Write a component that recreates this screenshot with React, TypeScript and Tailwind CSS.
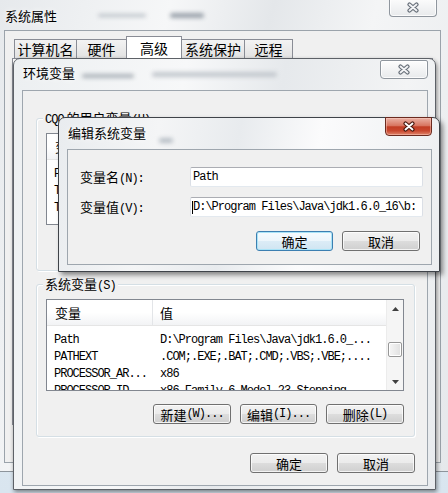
import React from "react";

const mono =
  "font-['Liberation_Mono','Noto_Sans_CJK_SC',monospace] text-[12px] tracking-[-1px]";

function M({ children }: { children: React.ReactNode }) {
  return <span className={mono}>{children}</span>;
}

function CloseX({ active }: { active?: boolean }) {
  const outer = active ? "#4a1a10" : "#68707a";
  const inner = active ? "#ffffff" : "#f3f4f6";
  return (
    <svg width="14" height="11" viewBox="0 0 14 11">
      <path d="M3.5 2.5 L10.5 8.5 M10.5 2.5 L3.5 8.5" stroke={outer} strokeWidth="4.2" strokeLinecap="round" fill="none" />
      <path d="M3.5 2.5 L10.5 8.5 M10.5 2.5 L3.5 8.5" stroke={inner} strokeWidth="1.9" strokeLinecap="round" fill="none" />
    </svg>
  );
}

function Btn({
  className,
  focus,
  children,
}: {
  className: string;
  focus?: boolean;
  children: React.ReactNode;
}) {
  return (
    <div
      className={`flex h-[20px] shrink-0 items-center justify-center rounded-[3px] border text-[13px] leading-none text-black ${
        focus
          ? "border-[#3c7fb1] bg-[linear-gradient(#f6fbfe_0%,#ecf5fb_50%,#dcecf6_50%,#d0e5f2_100%)] shadow-[inset_0_0_0_1px_#a9e3f7]"
          : "border-[#707070] bg-[linear-gradient(#f2f2f2_0%,#ebebeb_50%,#dddddd_50%,#cfcfcf_100%)] shadow-[inset_0_0_0_1px_rgba(255,255,255,0.75)]"
      } ${className}`}
    >
      {children}
    </div>
  );
}

function Arrow({ up }: { up?: boolean }) {
  return (
    <svg width="7" height="4" viewBox="0 0 7 4">
      <path d={up ? "M0 4 L3.5 0 L7 4Z" : "M0 0 L3.5 4 L7 0Z"} fill="#3f3f3f" />
    </svg>
  );
}

function ListView({ rows }: { rows: [string, string][] }) {
  return (
    <div className="flex h-[92px] w-[358px] shrink-0 border border-[#828790] bg-white">
      <div className="flex min-w-0 flex-1 flex-col overflow-hidden">
        <div className="flex h-[26px] shrink-0 border-b border-[#e5e5e5] bg-[linear-gradient(#ffffff_0%,#ffffff_50%,#f2f3f5_100%)] text-[13px] leading-none">
          <div className="flex w-[106px] items-center border-r border-[#e3e5e8] pl-[8px]">变量</div>
          <div className="flex items-center pl-[7px]">值</div>
        </div>
        <div className="flex flex-col pt-[2px]">
          {rows.map(([n, v]) => (
            <div key={n} className="flex h-[17px] shrink-0 items-center whitespace-nowrap leading-none text-black">
              <div className="w-[106px] shrink-0 overflow-hidden pl-[7px]">
                <M>{n}</M>
              </div>
              <div className="pl-[7px]">
                <M>{v}</M>
              </div>
            </div>
          ))}
        </div>
      </div>
      <div className="flex w-[17px] shrink-0 flex-col border-l border-[#ececec] bg-[#f5f5f5]">
        <div className="flex h-[17px] items-center justify-center">
          <Arrow up />
        </div>
        <div className="mx-[1px] mt-[25px] h-[15px] rounded-[2px] border border-[#979797] bg-[linear-gradient(90deg,#f6f6f6,#e0e0e0)] shadow-[inset_0_0_0_1px_#fff]" />
        <div className="mt-auto flex h-[17px] items-center justify-center">
          <Arrow />
        </div>
      </div>
    </div>
  );
}

function Group({ label, rows, btns }: { label: React.ReactNode; rows: [string, string][]; btns: React.ReactNode[] }) {
  return (
    <div className="relative flex h-[153px] w-[379px] shrink-0 flex-col rounded-[3px] border border-[#d5dfe5] pb-[12px] pl-[9px] pr-[10px] pt-[14px] shadow-[inset_1px_1px_0_#fff,1px_1px_0_#fff]">
      <div className="absolute left-[6px] top-[-9px] bg-[#f0f0f0] px-[2px] text-[13px] leading-[16px] text-black">{label}</div>
      <ListView rows={rows} />
      <div className="mt-[13px] flex justify-end gap-[9px]">
        <Btn className="w-[78px]">{btns[0]}</Btn>
        <Btn className="w-[77px]">{btns[1]}</Btn>
        <Btn className="w-[78px]">{btns[2]}</Btn>
      </div>
    </div>
  );
}

function Blob({ className }: { className: string }) {
  return <div className={`absolute rounded-full blur-[2px] ${className}`} />;
}

export default function App() {
  const tabs: [string, string, boolean][] = [
    ["计算机名", "w-[63px]", false],
    ["硬件", "w-[51px]", false],
    ["高级", "w-[56px]", true],
    ["系统保护", "w-[64px]", false],
    ["远程", "w-[49px]", false],
  ];
  return (
    <div className="relative h-[493px] w-[448px] overflow-hidden bg-[linear-gradient(180deg,#eef3f7,#d9e5ef)] font-['Noto_Sans_CJK_SC',sans-serif] text-black">
      {/* Outer window: 系统属性 */}
      <div className="absolute left-[-1px] top-[-3px] flex h-[475px] w-[450px] flex-col border border-[#8d949b] bg-[linear-gradient(105deg,#e6e9ec_0%,#f6f7f8_30%,#e4e7ea_48%,#f4f5f6_66%,#e5e8eb_100%)]">
        <div className="relative flex h-[32px] shrink-0 items-center pl-[5px] pt-[2px]">
          <span className="text-[13px] leading-none [text-shadow:0_0_6px_#fff]">系统属性</span>
          <Blob className="left-[98px] top-[16px] h-[3px] w-[48px] bg-[#b9c0c7]" />
          <Blob className="left-[170px] top-[15px] h-[5px] w-[34px] bg-[#9aa2ab]" />
          <div className="absolute left-[389px] top-0 flex h-[19px] w-[48px] items-center justify-center rounded-b-[4px] border border-t-0 border-[#8f969e] bg-[linear-gradient(#fdfdfd,#e8eaec)] shadow-[inset_0_0_0_1px_rgba(255,255,255,0.8)]">
            <CloseX />
          </div>
        </div>
        <div className="ml-[4px] flex h-[433px] w-[437px] shrink-0 flex-col border border-[#9ba3ab] bg-[#f0f0f0] px-[7px] pt-[5px]">
          <div className="flex h-[22px] shrink-0 items-end pl-[3px]">
            {tabs.map(([t, w, sel]) => (
              <div
                key={t}
                className={`-ml-px flex shrink-0 items-center justify-center border border-b-0 border-[#898c95] text-[14px] leading-none ${w} ${
                  sel ? "relative z-10 h-[22px] bg-white" : "h-[19px] bg-[linear-gradient(#f3f3f3,#e2e2e2)]"
                }`}
              >
                {t}
              </div>
            ))}
          </div>
          <div className="h-[367px] shrink-0 border border-[#898c95] bg-white" />
        </div>
      </div>

      {/* 环境变量 window */}
      <div className="absolute left-[13px] top-[58px] flex h-[432px] w-[423px] flex-col rounded-t-[7px] border border-[#5d6167] bg-[linear-gradient(100deg,#eceff1_0%,#f7f8f9_35%,#e6e9ec_55%,#f3f4f5_80%,#e8ebee_100%)] shadow-[1px_2px_4px_rgba(0,0,0,0.45)]">
        <div className="relative flex h-[31px] shrink-0 items-center pb-[5px] pl-[9px]">
          <span className="text-[13px] leading-none [text-shadow:0_0_6px_#fff]">环境变量</span>
          <Blob className="left-[68px] top-[15px] h-[4px] w-[52px] bg-[#aab1b8]" />
          <Blob className="left-[138px] top-[13px] h-[5px] w-[125px] bg-[#c3c8ce]" />
          <div className="absolute left-[366px] top-[1px] flex h-[19px] w-[48px] items-center justify-center rounded-[4px] rounded-t-[2px] border border-[#8f969e] bg-[linear-gradient(#fdfdfd,#e8eaec)] shadow-[inset_0_0_0_1px_rgba(255,255,255,0.8)]">
            <CloseX />
          </div>
        </div>
        <div className="ml-[8px] flex h-[396px] w-[406px] shrink-0 flex-col border border-[#9ea6ae] bg-[#f0f0f0] pb-[12px] pl-[13px] pr-[12px] pt-[27px]">
          <Group
            label={
              <>
                <M>CQQ</M> 的用户变量<M>(U)</M>
              </>
            }
            rows={[
              ["Path", "D:\\Program Files\\Java\\jdk1.6.0_..."],
              ["TEMP", "%USERPROFILE%\\AppData\\Local\\Temp"],
              ["TMP", "%USERPROFILE%\\AppData\\Local\\Temp"],
            ]}
            btns={[
              <>
                新建<M>(N)...</M>
              </>,
              <>
                编辑<M>(E)...</M>
              </>,
              <>
                删除<M>(D)</M>
              </>,
            ]}
          />
          <div className="mt-[13px]">
            <Group
              label={
                <>
                  系统变量<M>(S)</M>
                </>
              }
              rows={[
                ["Path", "D:\\Program Files\\Java\\jdk1.6.0_..."],
                ["PATHEXT", ".COM;.EXE;.BAT;.CMD;.VBS;.VBE;...."],
                ["PROCESSOR_AR...", "x86"],
                ["PROCESSOR_ID", "x86 Family 6 Model 23 Stepping..."],
              ]}
              btns={[
                <>
                  新建<M>(W)...</M>
                </>,
                <>
                  编辑<M>(I)...</M>
                </>,
                <>
                  删除<M>(L)</M>
                </>,
              ]}
            />
          </div>
          <div className="mt-[16px] flex justify-end gap-[9px]">
            <Btn className="w-[78px]">确定</Btn>
            <Btn className="w-[78px]">取消</Btn>
          </div>
        </div>
      </div>

      {/* 编辑系统变量 window (active) */}
      <div className="absolute left-[58px] top-[117px] flex h-[155px] w-[382px] flex-col rounded-t-[7px] border border-[#3f4349] bg-[linear-gradient(100deg,#e9ecef_0%,#f4f5f6_25%,#e8ebee_45%,#fbfbfc_65%,#eceef0_100%)] shadow-[3px_3px_5px_rgba(0,0,0,0.45)]">
        <div className="relative flex h-[31px] shrink-0 items-center pb-[3px] pl-[9px]">
          <span className="text-[13px] leading-none [text-shadow:0_0_6px_#fff]">编辑系统变量</span>
          <Blob className="left-[100px] top-[20px] h-[5px] w-[14px] bg-[#b7bec5]" />
          <div className="absolute left-[326px] top-[-1px] flex h-[19px] w-[47px] items-center justify-center rounded-b-[4px] border border-[#6b2a1f] bg-[linear-gradient(#eab1a4_0%,#d87560_45%,#c23d24_52%,#c9472e_75%,#e0866c_100%)] shadow-[inset_0_0_0_1px_rgba(255,210,200,0.45)]">
            <CloseX active />
          </div>
        </div>
        <div className="ml-[8px] flex h-[116px] w-[365px] shrink-0 flex-col border border-[#9ea6ae] bg-[#f0f0f0] pb-[13px] pl-[12px] pr-[8px] pt-[17px]">
          <div className="flex h-[20px] items-center justify-between">
            <span className="text-[13px] leading-none">
              变量名<M>(N):</M>
            </span>
            <div className="flex h-[20px] w-[233px] items-center overflow-hidden rounded-[2px] border border-[#abadb3] border-b-[#e3e9ef] border-x-[#dbdfe6] bg-white pl-[2px] leading-none">
              <M>Path</M>
            </div>
          </div>
          <div className="mt-[10px] flex h-[20px] items-center justify-between">
            <span className="text-[13px] leading-none">
              变量值<M>(V):</M>
            </span>
            <div className="flex h-[20px] w-[233px] items-center overflow-hidden whitespace-nowrap rounded-[2px] border border-[#abadb3] border-b-[#e3e9ef] border-x-[#dbdfe6] bg-white pl-[1px] leading-none">
              <span className="h-[13px] w-px shrink-0 bg-black" />
              <M>D:\Program Files\Java\jdk1.6.0_16\b:</M>
            </div>
          </div>
          <div className="mr-[3px] mt-[14px] flex justify-end gap-[9px]">
            <Btn className="w-[77px]" focus>
              确定
            </Btn>
            <Btn className="w-[78px]">取消</Btn>
          </div>
        </div>
      </div>
    </div>
  );
}
